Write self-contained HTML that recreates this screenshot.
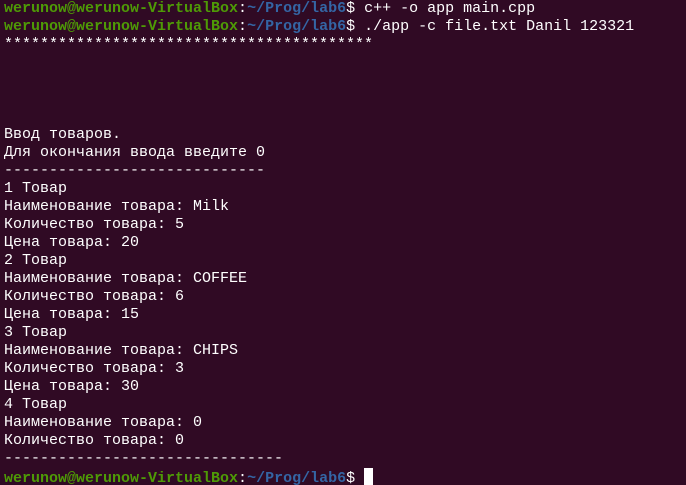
<!DOCTYPE html>
<html><head><meta charset="utf-8"><style>
html,body{margin:0;padding:0;background:#300a24;width:686px;height:485px;overflow:hidden}
pre{margin:0;padding:0 0 0 4px;font-family:"Liberation Mono","DejaVu Sans Mono",monospace;font-size:15px;line-height:18px;color:#fff;white-space:pre}
.g{color:#4e9a06;font-weight:bold}.b{color:#3465a4;font-weight:bold}
.c{display:inline-block;width:9px;height:17px;background:#fff;vertical-align:-3px}
</style></head><body><pre><span class="g">werunow@werunow-VirtualBox</span>:<span class="b">~/Prog/lab6</span>$ c++ -o app main.cpp
<span class="g">werunow@werunow-VirtualBox</span>:<span class="b">~/Prog/lab6</span>$ ./app -c file.txt Danil 123321
*****************************************




Ввод товаров.
Для окончания ввода введите 0
-----------------------------
1 Товар
Наименование товара: Milk
Количество товара: 5
Цена товара: 20
2 Товар
Наименование товара: COFFEE
Количество товара: 6
Цена товара: 15
3 Товар
Наименование товара: CHIPS
Количество товара: 3
Цена товара: 30
4 Товар
Наименование товара: 0
Количество товара: 0
-------------------------------
<span class="g">werunow@werunow-VirtualBox</span>:<span class="b">~/Prog/lab6</span>$ <span class="c"></span></pre></body></html>
